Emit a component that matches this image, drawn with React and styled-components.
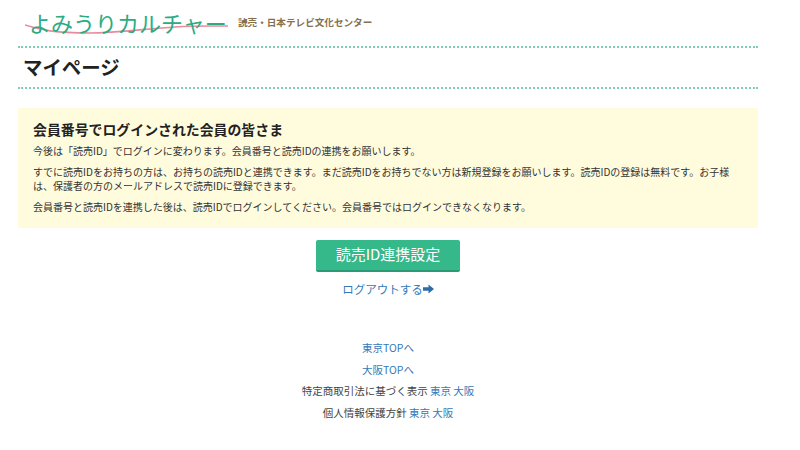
import React from "react";
import styled, { createGlobalStyle } from "styled-components";

const GlobalStyle = createGlobalStyle`
  html, body {
    margin: 0;
    padding: 0;
    background: #fff;
    color: #333;
    font-family: "Noto Sans CJK JP", "Liberation Sans", sans-serif;
    overflow: hidden;
  }
  a {
    color: #337ab7;
    text-decoration: none;
  }
`;

const App = () => {
  return (
    <Page>
      <GlobalStyle />
      <Header>
        <Logo>
          <LogoWave viewBox="0 0 206 14" aria-hidden="true">
            <path
              d="M0 1 C 15 6 30 9 65 9 C 90 9 120 5 150 3 C 170 1.5 190 2 203 2"
              fill="none"
              stroke="#e88b9c"
              strokeWidth="1.6"
            />
          </LogoWave>
          <LogoText>よみうりカルチャー</LogoText>
        </Logo>
        <Tagline>読売・日本テレビ文化センター</Tagline>
      </Header>
      <TitleBar>
        <h1>マイページ</h1>
      </TitleBar>
      <Notice>
        <h2>会員番号でログインされた会員の皆さま</h2>
        <p>今後は「読売ID」でログインに変わります。会員番号と読売IDの連携をお願いします。</p>
        <p>
          すでに読売IDをお持ちの方は、お持ちの読売IDと連携できます。まだ読売IDをお持ちでない方は新規登録をお願いします。読売IDの登録は無料です。お子様は、保護者の方のメールアドレスで読売IDに登録できます。
        </p>
        <p>会員番号と読売IDを連携した後は、読売IDでログインしてください。会員番号ではログインできなくなります。</p>
      </Notice>
      <Actions>
        <LinkButton href="#">読売ID連携設定</LinkButton>
        <LogoutLink href="#">
          ログアウトする
          <svg width="11" height="10" viewBox="0 0 12 10" aria-hidden="true">
            <path d="M0 3 H6 V0 L12 5 L6 10 V7 H0 Z" fill="#2f6da8" />
          </svg>
        </LogoutLink>
      </Actions>
      <FooterLinks>
        <FooterRow><a href="#">東京TOPへ</a></FooterRow>
        <FooterRow><a href="#">大阪TOPへ</a></FooterRow>
        <FooterRow>
          特定商取引法に基づく表示 <a href="#">東京</a> <a href="#">大阪</a>
        </FooterRow>
        <FooterRow>
          個人情報保護方針 <a href="#">東京</a> <a href="#">大阪</a>
        </FooterRow>
      </FooterLinks>
    </Page>
  );
};

export default App;

const Page = styled.div`
  width: 740px;
  margin-left: 18px;
`;

const Header = styled.div`
  display: flex;
  align-items: flex-end;
  height: 48px;
  padding-left: 7px;
  box-sizing: border-box;
  border-bottom: 2px dotted #7fcdb2;
`;

const Logo = styled.div`
  position: relative;
  width: 206px;
  height: 40px;
  margin-bottom: 6px;
`;

const LogoWave = styled.svg`
  position: absolute;
  left: 0;
  top: 24px;
  width: 206px;
  height: 14px;
`;

const LogoText = styled.div`
  position: absolute;
  left: 4px;
  top: 4px;
  font-size: 22px;
  line-height: 36px;
  font-weight: 400;
  color: #2bab83;
  white-space: nowrap;
`;

const Tagline = styled.div`
  margin: 0 0 17px 7px;
  font-size: 9.6px;
  line-height: 14px;
  font-weight: 700;
  color: #85714f;
  white-space: nowrap;
`;

const TitleBar = styled.div`
  height: 41px;
  box-sizing: border-box;
  padding-left: 5px;
  border-bottom: 2px dotted #7fcdb2;
  h1 {
    margin: 0;
    font-size: 19.4px;
    line-height: 38px;
    font-weight: 700;
    color: #222;
  }
`;

const Notice = styled.div`
  margin-top: 19px;
  height: 120px;
  box-sizing: border-box;
  padding: 12px 15px;
  background: #fffbdd;
  h2 {
    margin: 0 0 6px;
    font-size: 13.9px;
    line-height: 18px;
    font-weight: 700;
    color: #222;
  }
  p {
    margin: 0 0 7px;
    font-size: 10px;
    line-height: 14px;
    color: #333;
  }
`;

const Actions = styled.div`
  display: flex;
  flex-direction: column;
  align-items: center;
  margin-top: 12px;
`;

const LinkButton = styled.a`
  display: block;
  width: 144px;
  height: 32px;
  box-sizing: border-box;
  border-radius: 2px;
  border-bottom: 2px solid #2c9a76;
  background: #35b88a;
  font-size: 15px;
  line-height: 27px;
  text-align: center;
  color: #fff;
`;

const LogoutLink = styled.a`
  display: flex;
  align-items: center;
  margin-top: 8px;
  font-size: 11.5px;
  line-height: 18px;
`;

const FooterLinks = styled.div`
  margin-top: 42px;
  display: flex;
  flex-direction: column;
  align-items: center;
  gap: 5.7px;
`;

const FooterRow = styled.div`
  font-size: 10.5px;
  line-height: 16px;
  color: #444;
`;
